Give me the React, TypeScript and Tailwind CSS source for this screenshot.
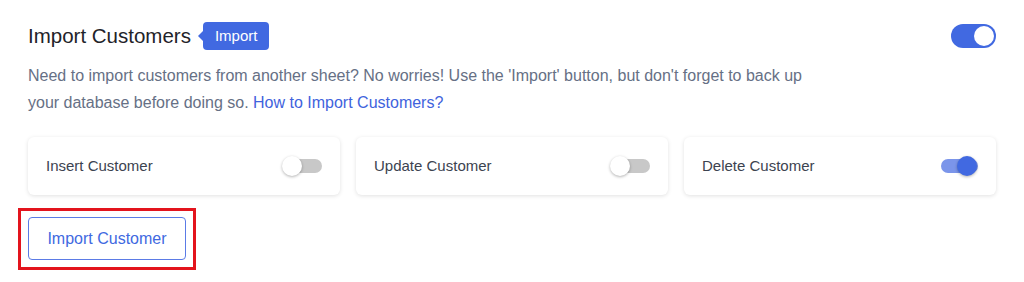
import React, { useState } from 'react';

const font = { fontFamily: '"Liberation Sans", Arial, sans-serif' };

const SmallToggle: React.FC<{ on: boolean; onChange: () => void }> = ({ on, onChange }) => (
  <button onClick={onChange} className="relative w-[40px] h-[20px] flex items-center">
    <span className={`absolute left-[3px] right-0 h-[14px] rounded-full ${on ? 'bg-[#7b95ea]' : 'bg-[#c8c8c8]'}`}></span>
    <span
      className={`absolute top-0 w-[20px] h-[20px] rounded-full shadow-[0_1px_3px_rgba(0,0,0,0.3)] ${
        on ? 'left-[19px] bg-[#4169e1]' : 'left-0 bg-white'
      }`}
    ></span>
  </button>
);

const App: React.FC = () => {
  const [enabled, setEnabled] = useState(true);
  const [options, setOptions] = useState({ insert: false, update: false, del: true });

  const cards = [
    { key: 'insert' as const, label: 'Insert Customer' },
    { key: 'update' as const, label: 'Update Customer' },
    { key: 'del' as const, label: 'Delete Customer' },
  ];

  return (
    <div className="min-h-screen bg-white px-[28px] pt-[22px]" style={font}>
      {/* Header */}
      <div className="flex items-center justify-between">
        <div className="flex items-center">
          <h1 className="text-[20.5px] text-[#1f2329] leading-[28px]">Import Customers</h1>
          <span className="relative ml-[12px] bg-[#4169e1] text-white text-[15px] leading-[28px] px-[12px] rounded-[4px]">
            <span className="absolute left-[-5px] top-[9px] w-0 h-0 border-y-[5px] border-y-transparent border-r-[5px] border-r-[#4169e1]"></span>
            Import
          </span>
        </div>
        <button
          onClick={() => setEnabled(!enabled)}
          className={`w-[45px] h-[24px] rounded-full flex items-center px-[2px] ${
            enabled ? 'bg-[#4169e1] justify-end' : 'bg-[#c8c8c8] justify-start'
          }`}
        >
          <span className="w-[20px] h-[20px] rounded-full bg-white"></span>
        </button>
      </div>

      {/* Description */}
      <p className="mt-[12px] max-w-[790px] text-[16px] leading-[27px] text-[#667085]">
        Need to import customers from another sheet? No worries! Use the 'Import' button, but don't forget to back up
        your database before doing so. <a href="#" className="text-[#3f63dd]">How to Import Customers?</a>
      </p>

      {/* Options */}
      <div className="mt-[21px] grid grid-cols-3 gap-[16px]">
        {cards.map((c) => (
          <div
            key={c.key}
            className="h-[58px] rounded-[6px] bg-white shadow-[0_1px_4px_rgba(0,0,0,0.12)] flex items-center justify-between pl-[18px] pr-[18px]"
          >
            <span className="text-[15px] text-[#3c4350]">{c.label}</span>
            <SmallToggle on={options[c.key]} onChange={() => setOptions({ ...options, [c.key]: !options[c.key] })} />
          </div>
        ))}
      </div>

      {/* Action */}
      <div className="mt-[13px] ml-[-10px] inline-block border-[3px] border-[#e3141d] px-[7px] pt-[6px] pb-[7px]">
        <button className="block w-[158px] h-[43px] rounded-[4px] border border-[#5b7be6] text-[16px] text-[#4169e1] bg-white">
          Import Customer
        </button>
      </div>
    </div>
  );
};

export default App;
